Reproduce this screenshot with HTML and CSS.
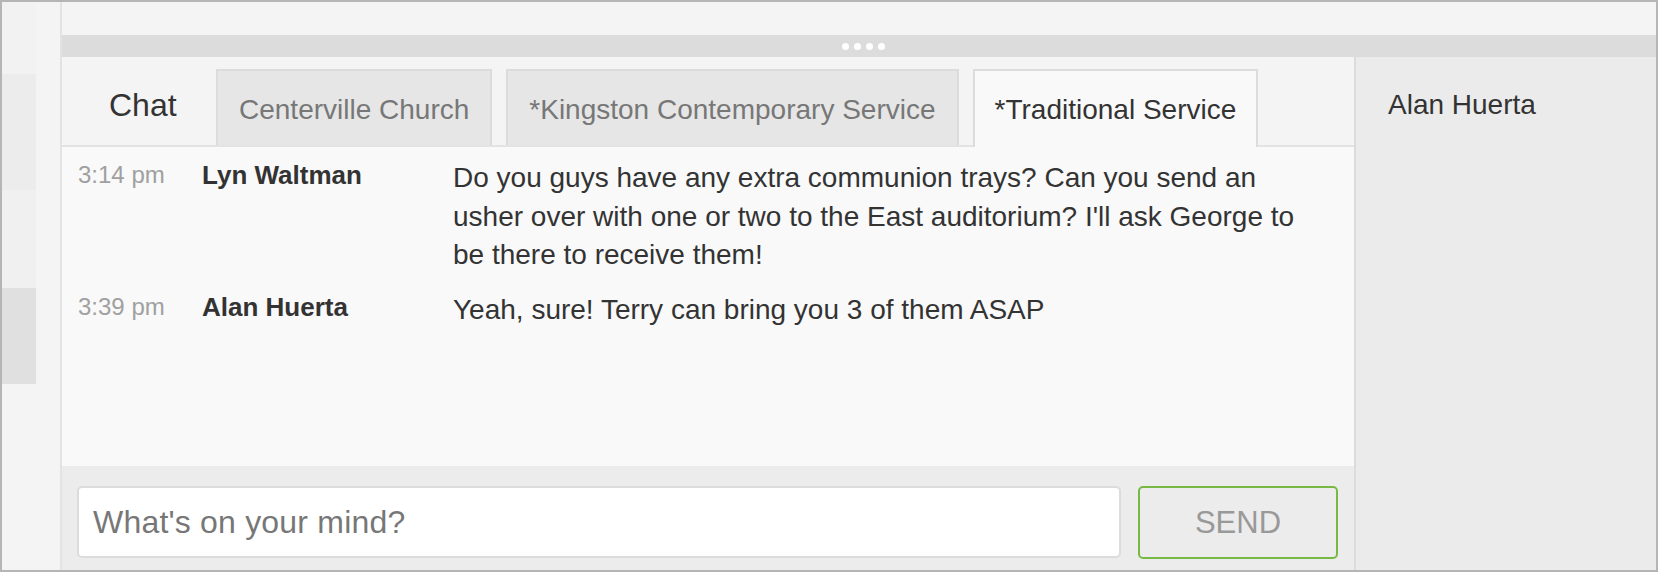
FILE: index.html
```html
<!DOCTYPE html>
<html lang="en">
<head>
    <meta charset="UTF-8">
    <meta name="viewport" content="width=device-width, initial-scale=1.0">
    <title>Chat</title>
    <link rel="stylesheet" href="styles.css">
</head>
<body>
    <div class="frame">
        <aside class="rail">
            <div class="rail-strip">
                <div class="band band-top"></div>
                <div class="band band-mid"></div>
                <div class="band band-light"></div>
                <div class="band band-dark"></div>
            </div>
            <div class="rail-gutter"></div>
        </aside>

        <main class="workspace">
            <div class="topbar"></div>
            <div class="splitter">
                <span class="grip"><i></i><i></i><i></i><i></i></span>
            </div>

            <div class="panes">
                <section class="chat">
                    <nav class="tabs">
                        <div class="tab-label">Chat</div>
                        <div class="tab">Centerville Church</div>
                        <div class="tab">*Kingston Contemporary Service</div>
                        <div class="tab active">*Traditional Service</div>
                    </nav>

                    <div class="messages">
                        <div class="msg">
                            <span class="time">3:14 pm</span>
                            <span class="author">Lyn Waltman</span>
                            <p class="text">Do you guys have any extra communion trays? Can you send an usher over with one or two to the East auditorium? I'll ask George to be there to receive them!</p>
                        </div>
                        <div class="msg">
                            <span class="time">3:39 pm</span>
                            <span class="author">Alan Huerta</span>
                            <p class="text">Yeah, sure! Terry can bring you 3 of them ASAP</p>
                        </div>
                    </div>

                    <form class="composer" onsubmit="return false">
                        <input class="composer-input" type="text" placeholder="What's on your mind?">
                        <button class="send-btn" type="submit">SEND</button>
                    </form>
                </section>

                <aside class="roster">
                    <div class="roster-name">Alan Huerta</div>
                </aside>
            </div>
        </main>
    </div>
</body>
</html>
```

FILE: styles.css
```css
html, body {
    margin: 0;
    padding: 0;
}
body {
    font-family: "Liberation Sans", Arial, Helvetica, sans-serif;
    color: #333;
    background-color: #f4f4f4;
}
.frame {
    display: flex;
    width: 1658px;
    height: 572px;
    box-sizing: border-box;
    border: 2px solid #b5b5b5;
    overflow: hidden;
}

/* left rail */
.rail {
    display: flex;
    width: 58px;
    flex-shrink: 0;
    border-right: 2px solid #e3e3e3;
}
.rail-strip {
    width: 34px;
    display: flex;
    flex-direction: column;
    background-color: #f4f4f4;
}
.band-top {
    height: 72px;
    background-color: #f2f2f2;
}
.band-mid {
    height: 116px;
    background-color: #ececec;
}
.band-light {
    height: 98px;
    background-color: #f0f0f0;
}
.band-dark {
    height: 96px;
    background-color: #e0e0e0;
}
.rail-gutter {
    flex: 1;
    background-color: #f4f4f4;
}

/* main */
.workspace {
    flex: 1;
    display: flex;
    flex-direction: column;
    min-width: 0;
}
.topbar {
    height: 33px;
    background-color: #f4f4f4;
}
.splitter {
    height: 22px;
    background-color: #dcdcdc;
    display: flex;
    align-items: center;
    justify-content: center;
    padding-left: 8px;
}
.grip {
    display: flex;
    gap: 5px;
}
.grip i {
    width: 7px;
    height: 7px;
    border-radius: 50%;
    background-color: #fff;
}
.panes {
    flex: 1;
    display: flex;
    min-height: 0;
}

/* chat column */
.chat {
    width: 1292px;
    display: flex;
    flex-direction: column;
    background-color: #f9f9f9;
}
.tabs {
    display: flex;
    align-items: flex-end;
    gap: 14px;
    height: 88px;
    background-color: #f4f4f4;
    border-bottom: 2px solid #e3e3e3;
}
.tab-label {
    width: 140px;
    height: 76px;
    box-sizing: border-box;
    padding: 0 0 4px 47px;
    display: flex;
    align-items: center;
    font-size: 32px;
    color: #333;
}
.tab {
    height: 76px;
    box-sizing: border-box;
    padding: 3px 21px 0;
    display: flex;
    align-items: center;
    background-color: #e6e6e6;
    border: 2px solid #dcdcdc;
    border-bottom: none;
    font-size: 28px;
    color: #777;
    white-space: nowrap;
}
.tab.active {
    height: 78px;
    padding: 1px 20px 0;
    margin-bottom: -2px;
    background-color: #f9f9f9;
    color: #333;
}

.messages {
    flex: 1;
    padding: 12px 30px 0 16px;
}
.msg {
    display: grid;
    grid-template-columns: 124px 251px 1fr;
    align-items: start;
    margin-bottom: 16px;
}
.time {
    font-size: 24px;
    line-height: 31px;
    color: #a0a0a0;
}
.author {
    font-size: 26px;
    line-height: 33px;
    font-weight: bold;
    color: #333;
}
.text {
    margin: 0;
    font-size: 28px;
    line-height: 38.5px;
    color: #333;
}

.composer {
    display: flex;
    gap: 17px;
    height: 104px;
    box-sizing: border-box;
    padding: 20px 16px 0 15px;
    margin: 0;
    background-color: #ececec;
}
.composer-input {
    flex: 1;
    height: 72px;
    box-sizing: border-box;
    padding: 0 14px;
    border: 2px solid #dcdcdc;
    border-radius: 5px;
    background-color: #fff;
    font-family: inherit;
    font-size: 32px;
    letter-spacing: 0.2px;
    color: #333;
    outline: none;
}
.composer-input::placeholder {
    color: #777;
}
.send-btn {
    width: 200px;
    height: 73px;
    box-sizing: border-box;
    border: 2px solid #78b945;
    border-radius: 5px;
    background-color: #ececec;
    font-family: inherit;
    font-size: 31px;
    color: #999;
    cursor: pointer;
}

/* right roster */
.roster {
    flex: 1;
    border-left: 2px solid #dcdcdc;
    background-color: #ebebeb;
    padding: 29px 0 0 32px;
}
.roster-name {
    font-size: 28px;
    line-height: 38px;
    color: #333;
}
```
